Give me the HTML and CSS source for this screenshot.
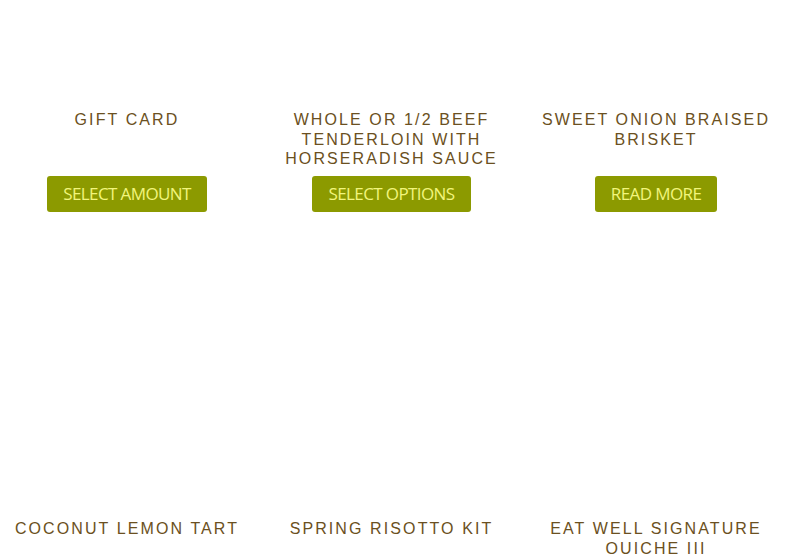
FILE: index.html
```html
<!DOCTYPE html>
<html lang="en">
<head>
<meta charset="utf-8">
<title>Products</title>
<link rel="stylesheet" href="styles.css">
</head>
<body>
<ul class="products">
  <li class="product">
    <div class="thumb"></div>
    <h2 class="title">Gift Card</h2>
    <a class="button" href="#">Select amount</a>
  </li>
  <li class="product">
    <div class="thumb"></div>
    <h2 class="title">Whole or 1/2 Beef Tenderloin with Horseradish Sauce</h2>
    <a class="button" href="#">Select options</a>
  </li>
  <li class="product">
    <div class="thumb"></div>
    <h2 class="title">Sweet Onion Braised Brisket</h2>
    <a class="button" href="#">Read more</a>
  </li>
  <li class="product">
    <div class="thumb"></div>
    <h2 class="title">Coconut Lemon Tart</h2>
  </li>
  <li class="product">
    <div class="thumb"></div>
    <h2 class="title">Spring Risotto Kit</h2>
  </li>
  <li class="product">
    <div class="thumb"></div>
    <h2 class="title">Eat Well Signature Quiche III</h2>
  </li>
</ul>
</body>
</html>
```
FILE: styles.css
```css
html, body {
  margin: 0;
  padding: 0;
  background: #ffffff;
  overflow: hidden;
}

.products {
  list-style: none;
  margin: -154px 0 0 0;
  padding: 0;
  display: grid;
  grid-template-columns: repeat(3, 254px);
  column-gap: 10.5px;
  row-gap: 43.5px;
}

.product {
  display: flex;
  flex-direction: column;
  align-items: center;
  text-align: center;
}

.thumb {
  width: 254px;
  height: 254px;
  background: #ffffff;
}

.title {
  margin: 10px 0 0 0;
  min-height: 58.5px;
  font-family: "Liberation Sans", Arial, sans-serif;
  font-weight: 400;
  font-size: 16px;
  line-height: 19.5px;
  letter-spacing: 2.1px;
  text-transform: uppercase;
  color: #6b5021;
}

.button {
  margin-top: 7px;
  display: inline-block;
  padding: 0 16px;
  height: 36px;
  line-height: 36px;
  background: #8c9a00;
  color: #f2f57c;
  border-radius: 3px;
  font-family: "Open Sans", sans-serif;
  font-size: 17px;
  letter-spacing: -0.6px;
  text-transform: uppercase;
  text-decoration: none;
}
```
